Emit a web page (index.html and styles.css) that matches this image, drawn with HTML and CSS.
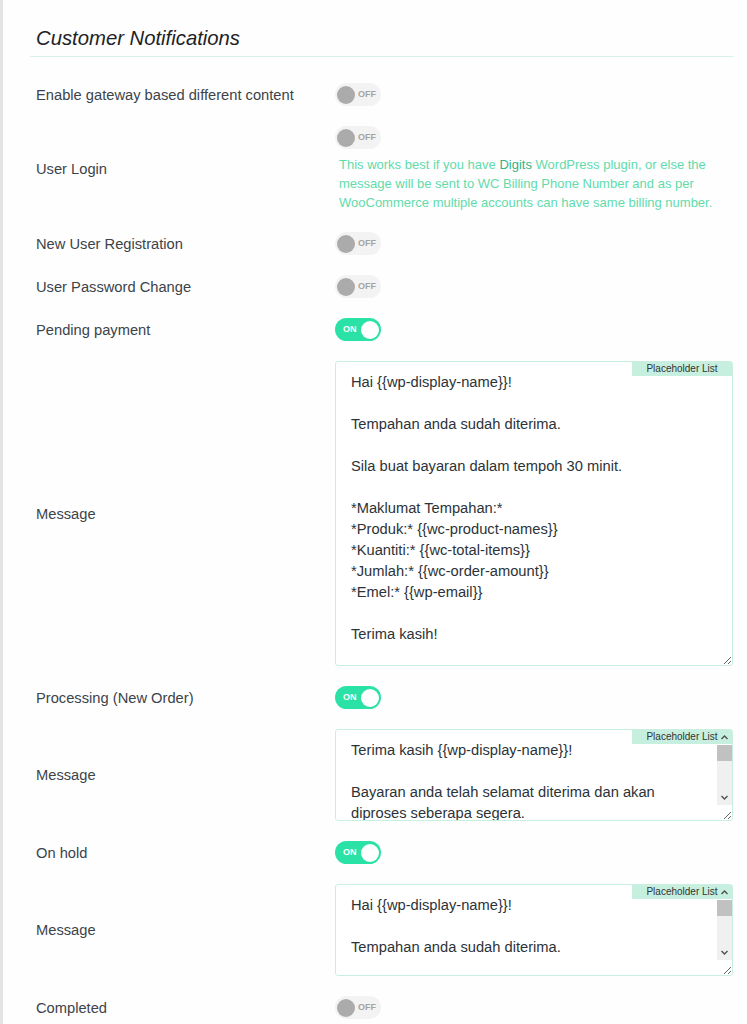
FILE: index.html
```html
<!DOCTYPE html>
<html lang="ms">
<head>
<meta charset="utf-8">
<title>Customer Notifications</title>
<link rel="stylesheet" href="styles.css">
</head>
<body>
<div class="page">
  <h2 class="section-title">Customer Notifications</h2>
  <div class="rows">
    <div class="row">
      <div class="label">Enable gateway based different content</div>
      <div class="control"><span class="toggle off"><span class="knob"></span><span class="tlabel">OFF</span></span></div>
    </div>
    <div class="row">
      <div class="label">User Login</div>
      <div class="control">
        <span class="toggle off"><span class="knob"></span><span class="tlabel">OFF</span></span>
        <p class="help">This works best if you have <span class="strong">Digits</span> WordPress plugin, or else the<br>message will be sent to WC Billing Phone Number and as per<br>WooCommerce multiple accounts can have same billing number.</p>
      </div>
    </div>
    <div class="row">
      <div class="label">New User Registration</div>
      <div class="control"><span class="toggle off"><span class="knob"></span><span class="tlabel">OFF</span></span></div>
    </div>
    <div class="row">
      <div class="label">User Password Change</div>
      <div class="control"><span class="toggle off"><span class="knob"></span><span class="tlabel">OFF</span></span></div>
    </div>
    <div class="row">
      <div class="label">Pending payment</div>
      <div class="control"><span class="toggle on"><span class="tlabel">ON</span><span class="knob"></span></span></div>
    </div>
    <div class="row">
      <div class="label">Message</div>
      <div class="control">
        <div class="msg">
          <span class="ph-tab">Placeholder List</span>
          <textarea class="msg-text tall">Hai {{wp-display-name}}!

Tempahan anda sudah diterima.

Sila buat bayaran dalam tempoh 30 minit.

*Maklumat Tempahan:*
*Produk:* {{wc-product-names}}
*Kuantiti:* {{wc-total-items}}
*Jumlah:* {{wc-order-amount}}
*Emel:* {{wp-email}}

Terima kasih!</textarea>
        </div>
      </div>
    </div>
    <div class="row">
      <div class="label">Processing (New Order)</div>
      <div class="control"><span class="toggle on"><span class="tlabel">ON</span><span class="knob"></span></span></div>
    </div>
    <div class="row">
      <div class="label">Message</div>
      <div class="control">
        <div class="msg">
          <span class="ph-tab">Placeholder List</span>
          <textarea class="msg-text short">Terima kasih {{wp-display-name}}!

Bayaran anda telah selamat diterima dan akan diproses seberapa segera.

*Maklumat Tempahan:*
*No. Tempahan:* {{wc-order}}
*Produk:* {{wc-product-names}}
*Kuantiti:* {{wc-total-items}}
*Jumlah:* {{wc-order-amount}}

Terima kasih!</textarea>
          <div class="sb" aria-hidden="true">
            <span class="sb-btn up"><svg width="15" height="15" viewBox="0 0 15 15"><path d="M4.5 9L7.5 6L10.5 9" fill="none" stroke="#505050" stroke-width="1.4"/></svg></span>
            <span class="sb-track"><span class="sb-thumb"></span></span>
            <span class="sb-btn down"><svg width="15" height="15" viewBox="0 0 15 15"><path d="M4.5 6L7.5 9L10.5 6" fill="none" stroke="#505050" stroke-width="1.4"/></svg></span>
          </div>
        </div>
      </div>
    </div>
    <div class="row">
      <div class="label">On hold</div>
      <div class="control"><span class="toggle on"><span class="tlabel">ON</span><span class="knob"></span></span></div>
    </div>
    <div class="row">
      <div class="label">Message</div>
      <div class="control">
        <div class="msg">
          <span class="ph-tab">Placeholder List</span>
          <textarea class="msg-text short">Hai {{wp-display-name}}!

Tempahan anda sudah diterima.

Tempahan anda sedang ditahan sehingga pembayaran disahkan.

*Maklumat Tempahan:*
*Produk:* {{wc-product-names}}
*Jumlah:* {{wc-order-amount}}

Terima kasih!</textarea>
          <div class="sb" aria-hidden="true">
            <span class="sb-btn up"><svg width="15" height="15" viewBox="0 0 15 15"><path d="M4.5 9L7.5 6L10.5 9" fill="none" stroke="#505050" stroke-width="1.4"/></svg></span>
            <span class="sb-track"><span class="sb-thumb"></span></span>
            <span class="sb-btn down"><svg width="15" height="15" viewBox="0 0 15 15"><path d="M4.5 6L7.5 9L10.5 6" fill="none" stroke="#505050" stroke-width="1.4"/></svg></span>
          </div>
        </div>
      </div>
    </div>
    <div class="row">
      <div class="label">Completed</div>
      <div class="control"><span class="toggle off"><span class="knob"></span><span class="tlabel">OFF</span></span></div>
    </div>
  </div>
</div>
</body>
</html>
```

FILE: styles.css
```css
html, body {
  margin: 0;
  padding: 0;
  background: #fefefe;
}

body {
  font-family: "Liberation Sans", Arial, sans-serif;
  color: #3c434a;
}

.page {
  border-left: 3px solid #e4e4e4;
  padding: 0 14px 0 27px;
  min-height: 100vh;
  box-sizing: border-box;
}

.section-title {
  margin: 0;
  padding: 26px 6px 6px;
  font-size: 20.3px;
  line-height: 24px;
  font-style: italic;
  font-weight: 400;
  color: #1d2327;
  border-bottom: 1px solid #d9f2e9;
}

.rows {
  margin-top: 16px;
}

.row {
  display: grid;
  grid-template-columns: 305px 1fr;
  align-items: center;
  padding: 10px 0;
}

.label {
  padding-left: 6px;
  font-size: 14.7px;
  line-height: 20px;
  color: #3c434a;
}

.control {
  display: flex;
  flex-direction: column;
  align-items: flex-start;
}

.toggle {
  display: inline-flex;
  align-items: center;
  box-sizing: border-box;
  width: 46px;
  height: 23px;
  border-radius: 12px;
  padding: 0 2px;
}

.toggle .knob {
  width: 18px;
  height: 18px;
  border-radius: 50%;
  flex: none;
}

.toggle .tlabel {
  font-size: 9px;
  font-weight: 700;
  line-height: 1;
}

.toggle.off {
  background: #f3f3f3;
}

.toggle.off .knob {
  background: #ababab;
}

.toggle.off .tlabel {
  color: #a3a3a3;
  margin-left: 3px;
}

.toggle.on {
  background: #2ae2a5;
  justify-content: space-between;
  padding: 0 2px 0 8px;
}

.toggle.on .knob {
  background: #ffffff;
}

.toggle.on .tlabel {
  color: #ffffff;
}

.help {
  margin: 6px 0 0;
  padding-left: 4px;
  font-size: 13px;
  line-height: 19px;
  color: #62dbab;
}

.help .strong {
  color: #33b386;
}

.msg {
  position: relative;
  z-index: 0;
  width: 398px;
  background: #ffffff;
  border-radius: 3px;
}

.ph-tab {
  position: absolute;
  z-index: 0;
  top: 1px;
  right: 1px;
  width: 100px;
  height: 14px;
  background: #c7efdf;
  font-size: 10px;
  line-height: 14px;
  text-align: center;
  color: #333333;
}

.msg-text {
  position: relative;
  z-index: 1;
  display: block;
  box-sizing: border-box;
  width: 398px;
  margin: 0;
  padding: 10px 15px;
  border: 1px solid #c8efe0;
  border-radius: 3px;
  background: transparent;
  font-family: "Liberation Sans", Arial, sans-serif;
  font-size: 14.7px;
  line-height: 21px;
  color: #2c3338;
  overflow: hidden;
}

.msg-text.tall {
  height: 305px;
}

.msg-text.short {
  height: 92px;
  padding-right: 30px;
}

.sb {
  position: absolute;
  z-index: 2;
  top: 1px;
  right: 1px;
  width: 15px;
  height: 75px;
  display: flex;
  flex-direction: column;
}

.sb-btn {
  display: block;
  width: 15px;
  height: 15px;
  flex: none;
}

.sb-btn svg {
  display: block;
}

.sb-btn.down {
  background: #f0f0f0;
}

.sb-track {
  flex: 1;
  display: block;
  background: #f0f0f0;
}

.sb-thumb {
  display: block;
  height: 16px;
  background: #c1c1c1;
}
```
